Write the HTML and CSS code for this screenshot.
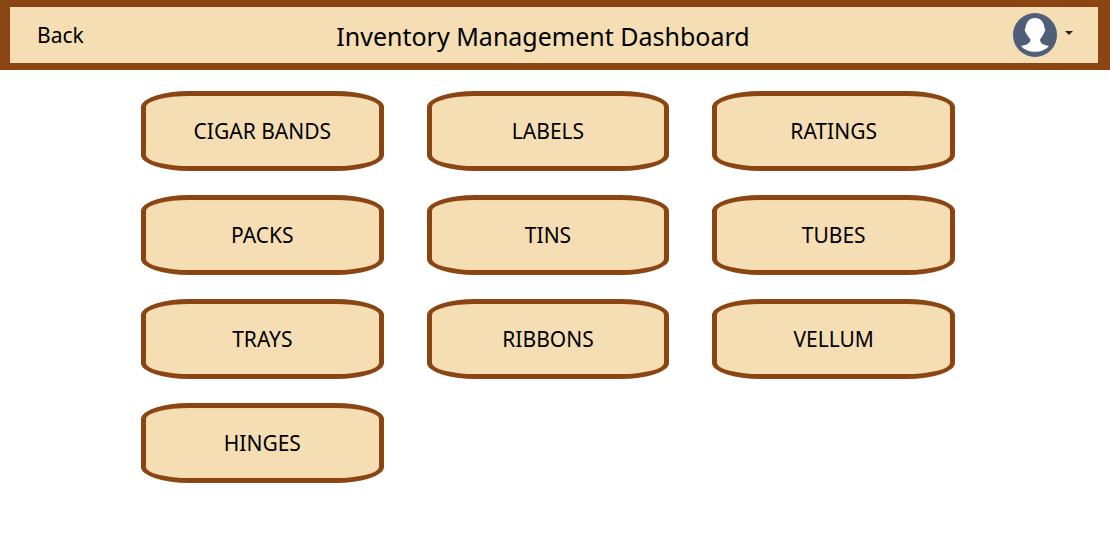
FILE: index.html
```html
<!DOCTYPE html>
<html lang="en">
<head>
<meta charset="utf-8">
<meta name="viewport" content="width=device-width, initial-scale=1">
<title>Inventory Management Dashboard</title>
<link rel="stylesheet" href="styles.css">
</head>
<body>
<header class="topbar">
  <a class="back" href="#">Back</a>
  <h1 class="title">Inventory Management Dashboard</h1>
  <button class="account" type="button" aria-label="Account menu">
    <svg class="avatar" viewBox="0 0 44 44" aria-hidden="true">
      <circle cx="22" cy="22" r="22" fill="#505f79"/>
      <path d="M22 5C27.500 5 31 9 31.500 15C32.600 16 32.400 18 31.400 19C30.500 22 28.500 24 27 26.500C27 30 30 32 36 33C33 36.500 28 38.800 22 38.800C16 38.800 11 36.500 8 33C14 32 17.500 30 17.500 26.500C16 24 13.500 22 12.600 19C11.600 18 11.400 16 12.500 15C13 9 16.500 5 22 5Z" fill="#fff"/>
    </svg>
    <svg class="caret" viewBox="0 0 8 4" aria-hidden="true"><path d="M0 0H8L4 4Z" fill="#212529"/></svg>
  </button>
</header>
<main class="cards">
  <button class="card" type="button">CIGAR BANDS</button>
  <button class="card" type="button">LABELS</button>
  <button class="card" type="button">RATINGS</button>
  <button class="card" type="button">PACKS</button>
  <button class="card" type="button">TINS</button>
  <button class="card" type="button">TUBES</button>
  <button class="card" type="button">TRAYS</button>
  <button class="card" type="button">RIBBONS</button>
  <button class="card" type="button">VELLUM</button>
  <button class="card" type="button">HINGES</button>
</main>
</body>
</html>
```
FILE: styles.css
```css
* {
  box-sizing: border-box;
}

body {
  margin: 0;
  background: #fff;
  color: #000;
  font-family: "Segoe UI", "Noto Sans", "Open Sans", sans-serif;
}

.topbar {
  display: grid;
  grid-template-columns: 1fr auto 1fr;
  align-items: center;
  padding: 6px 25px 6px 27px;
  border: solid #8b4513;
  border-width: 7px 12px 7px 10px;
  background: #f5deb3;
}

.back {
  justify-self: start;
  color: inherit;
  font-size: 21px;
  line-height: 32px;
  text-decoration: none;
}

.title {
  margin: 0;
  padding: 2px 24px 0 0;
  font-size: 25px;
  font-weight: 400;
  line-height: 32px;
}

.account {
  display: flex;
  justify-self: end;
  align-items: center;
  gap: 8px;
  padding: 0;
  border: 0;
  background: none;
  cursor: pointer;
}

.avatar {
  width: 44px;
  height: 44px;
}

.caret {
  width: 8px;
  height: 4px;
  margin-bottom: 4px;
}

.cards {
  display: grid;
  grid-template-columns: repeat(3, 1fr);
  gap: 24px 43px;
  padding: 21px 155px 48px 141px;
}

.card {
  padding: 19px 12px;
  border: 5px solid #8b4513;
  border-radius: 20%;
  background: #f5deb3;
  color: inherit;
  font-family: inherit;
  font-size: 21px;
  line-height: 32px;
  cursor: pointer;
}
```
